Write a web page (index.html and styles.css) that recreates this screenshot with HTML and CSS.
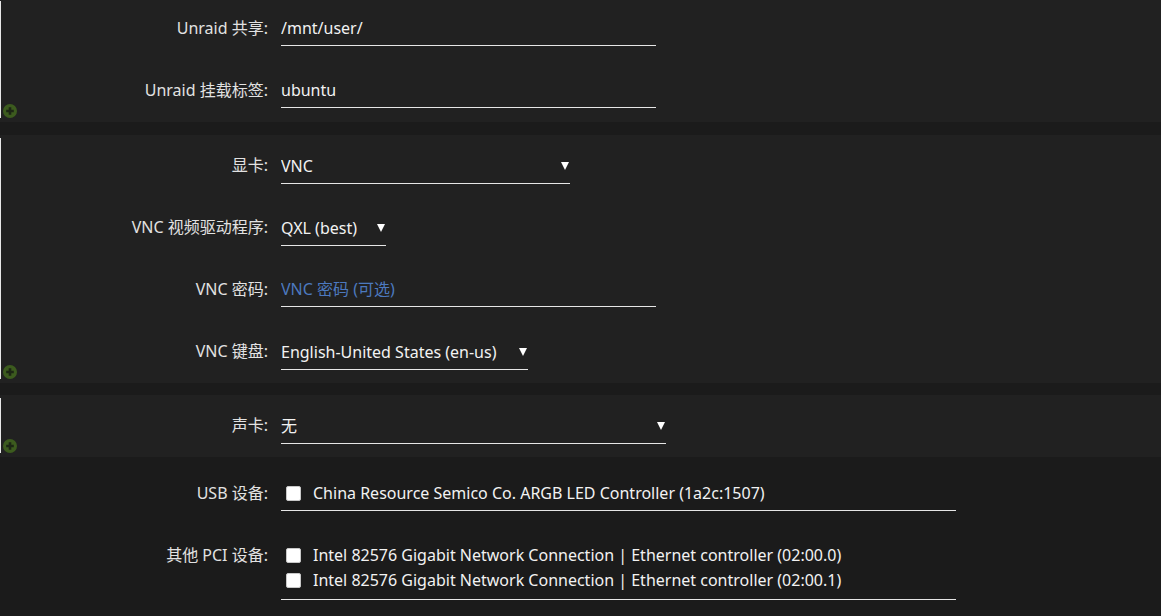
FILE: index.html
```html
<!DOCTYPE html>
<html lang="zh-CN">
<head>
    <meta charset="UTF-8">
    <title>VM 设置</title>
    <link rel="stylesheet" href="styles.css">
</head>
<body>
    <div class="page">
        <div class="section">
            <div class="row">
                <label class="label">Unraid 共享:</label>
                <input class="text-input" type="text" value="/mnt/user/">
            </div>
            <div class="row">
                <label class="label">Unraid 挂载标签:</label>
                <input class="text-input" type="text" value="ubuntu">
            </div>
            <span class="add-btn"><svg width="14" height="14" viewBox="0 0 14 14"><circle cx="7" cy="7" r="7" fill="#3c5b1e"/><path d="M7 3.2v7.6M3.2 7h7.6" stroke="#1c2614" stroke-width="2.6"/></svg></span>
        </div>

        <div class="section">
            <div class="row">
                <label class="label">显卡:</label>
                <div class="select w-gpu"><select><option>VNC</option></select></div>
            </div>
            <div class="row">
                <label class="label">VNC 视频驱动程序:</label>
                <div class="select w-driver"><select><option>QXL (best)</option></select></div>
            </div>
            <div class="row">
                <label class="label">VNC 密码:</label>
                <input class="text-input" type="password" placeholder="VNC 密码 (可选)">
            </div>
            <div class="row">
                <label class="label">VNC 键盘:</label>
                <div class="select w-keymap"><select><option>English-United States (en-us)</option></select></div>
            </div>
            <span class="add-btn"><svg width="14" height="14" viewBox="0 0 14 14"><circle cx="7" cy="7" r="7" fill="#3c5b1e"/><path d="M7 3.2v7.6M3.2 7h7.6" stroke="#1c2614" stroke-width="2.6"/></svg></span>
        </div>

        <div class="section">
            <div class="row">
                <label class="label">声卡:</label>
                <div class="select w-sound"><select><option>无</option></select></div>
            </div>
            <span class="add-btn"><svg width="14" height="14" viewBox="0 0 14 14"><circle cx="7" cy="7" r="7" fill="#3c5b1e"/><path d="M7 3.2v7.6M3.2 7h7.6" stroke="#1c2614" stroke-width="2.6"/></svg></span>
        </div>

        <div class="plain">
            <div class="row">
                <label class="label">USB 设备:</label>
                <div class="checklist">
                    <label class="check"><input type="checkbox"><span>China Resource Semico Co. ARGB LED Controller (1a2c:1507)</span></label>
                </div>
            </div>
            <div class="row">
                <label class="label">其他 PCI 设备:</label>
                <div class="checklist multi">
                    <label class="check"><input type="checkbox"><span>Intel 82576 Gigabit Network Connection | Ethernet controller (02:00.0)</span></label>
                    <label class="check"><input type="checkbox"><span>Intel 82576 Gigabit Network Connection | Ethernet controller (02:00.1)</span></label>
                </div>
            </div>
        </div>
    </div>
</body>
</html>
```

FILE: styles.css
```css
:root {
    --bg-dark: #1b1b1b;
    --bg-section: #212121;
    --text-label: #e2e2e2;
    --text-value: #f2f2f2;
    --line: #e6e6e6;
    --placeholder: #4c79bf;
}

* {
    margin: 0;
    padding: 0;
    box-sizing: border-box;
}

body {
    font-family: 'Noto Sans', 'Noto Sans CJK SC', sans-serif;
    font-size: 16px;
    background: var(--bg-dark);
    color: var(--text-value);
    overflow: hidden;
}

.page {
    margin-top: -2px;
}

.section {
    position: relative;
    background: var(--bg-section);
}

.section + .section {
    margin-top: 12.5px;
}

/* thin white rule on the left edge of each block */
.section::before {
    content: '';
    position: absolute;
    left: 0;
    top: 3px;
    bottom: 4px;
    width: 1px;
    background: #e8e8e8;
}

.add-btn {
    position: absolute;
    left: 3px;
    bottom: 4px;
    width: 14px;
    height: 14px;
    display: flex;
}

.plain {
    padding-top: 6px;
}

.row {
    display: flex;
    align-items: flex-start;
    min-height: 62px;
    padding-top: 20px;
}

.label {
    width: 268px;
    margin-right: 13px;
    text-align: right;
    line-height: 20px;
    color: var(--text-label);
}

.text-input,
.select select {
    font: inherit;
    color: var(--text-value);
    background: transparent;
    border: none;
    border-bottom: 1px solid var(--line);
    outline: none;
    height: 28px;
    line-height: 20px;
    padding: 0 0 7px 0;
}

.text-input {
    width: 375px;
}

.text-input::placeholder {
    color: var(--placeholder);
    opacity: 1;
}

.select {
    position: relative;
}

.select select {
    appearance: none;
    -webkit-appearance: none;
    width: 100%;
    border-radius: 0;
}

.select::after {
    content: '';
    position: absolute;
    right: 1px;
    top: 7px;
    border-left: 4px solid transparent;
    border-right: 4px solid transparent;
    border-top: 8px solid #fff;
    pointer-events: none;
}

.w-gpu { width: 289px; }
.w-driver { width: 105px; }
.w-keymap { width: 247px; }
.w-sound { width: 385px; }

.checklist {
    width: 675px;
    border-bottom: 1px solid var(--line);
    padding-bottom: 7px;
    display: flex;
    flex-direction: column;
    gap: 5px;
}

.checklist.multi {
    padding-bottom: 9px;
}

.check {
    display: flex;
    align-items: center;
    line-height: 20px;
    color: var(--text-value);
}

.check input {
    appearance: none;
    -webkit-appearance: none;
    width: 15px;
    height: 15px;
    margin: 0 12px 0 5px;
    background: #fff;
    border: 1px solid #c8c8c8;
    border-radius: 2px;
}
```
